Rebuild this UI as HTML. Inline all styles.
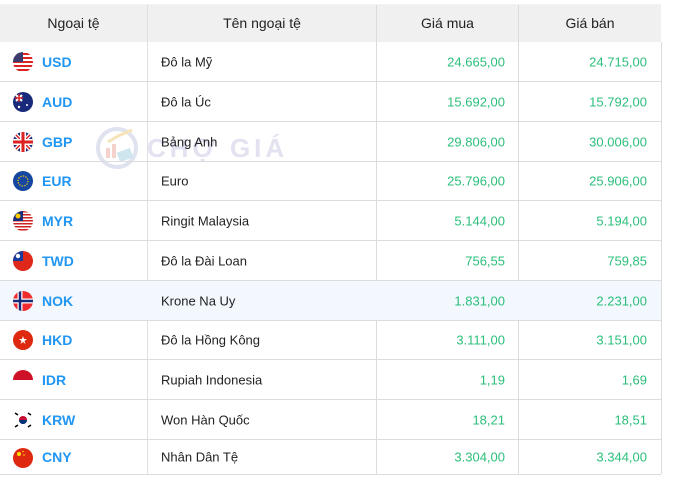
<!DOCTYPE html>
<html><head><meta charset="utf-8"><style>
body{margin:0;width:681px;height:481px;background:#fff;font-family:"Liberation Sans",Arial,sans-serif;position:relative;overflow:hidden}
.hd{position:absolute;top:5px;left:0;width:661px;height:37px;background:#f0f0f0}
.hd div{position:absolute;top:0;height:37px;line-height:36px;text-align:center;font-size:14px;color:#222}
.vl{position:absolute;width:1px;background:#dcdcdc}
.row{position:absolute;left:0;width:661px;border-bottom:1px solid #dcdcdc;font-size:13px}
.row span{position:absolute;top:50%;transform:translateY(-50%)}
.c{left:42px;color:#2196f3;font-weight:bold;font-size:14px}
.n{left:161px;color:#222}
.b{right:156px;color:#2cbf7b}
.s{right:14px;color:#2cbf7b}
.row svg{position:absolute;left:13px;top:50%;margin-top:-10px}
</style></head><body>
<div style="position:absolute;top:4px;left:0;width:661px;height:1px;background:#f3f3f3"></div>
<svg style="position:absolute;left:96px;top:124px" width="44" height="46"><circle cx="21" cy="24" r="19" fill="none" stroke="#dfe2ef" stroke-width="4"/><rect x="10" y="24" width="4" height="10" fill="#f5d3cc"/><rect x="16" y="20" width="4" height="14" fill="#f5d3cc"/><path d="M12 18L22 12L36 6" stroke="#f6e3b8" stroke-width="3" fill="none"/><rect x="22" y="26" width="14" height="10" fill="#cfe6ee" transform="rotate(-20 29 31)"/></svg>
<div style="position:absolute;left:147px;top:133px;font-size:26px;font-weight:bold;color:#e2e2f0;letter-spacing:4px">CHỢ GIÁ</div>
<div class="hd">
<div style="left:0;width:147px">Ngoại tệ</div>
<div style="left:148px;width:228px">Tên ngoại tệ</div>
<div style="left:377px;width:141px">Giá mua</div>
<div style="left:519px;width:142px">Giá bán</div>
</div>
<div class="vl" style="left:147px;top:5px;height:469px;background:#e0e0e0"></div>
<div class="vl" style="left:376px;top:5px;height:469px"></div>
<div class="vl" style="left:518px;top:5px;height:469px"></div>
<div class="vl" style="left:661px;top:42px;height:432px"></div>

<div class="row" style="top:42px;height:39px"><svg width="20" height="20"><clipPath id="a"><circle cx="10" cy="10" r="10"/></clipPath><g clip-path="url(#a)"><rect width="20" height="20" fill="#fff"/><rect y="1" width="20" height="2" fill="#d22"/><rect y="5" width="20" height="2" fill="#d22"/><rect y="9" width="20" height="2" fill="#d22"/><rect y="13" width="20" height="2" fill="#d22"/><rect y="17" width="20" height="2" fill="#d22"/><rect width="10" height="10" fill="#3c3b6e"/></g></svg><span class="c">USD</span><span class="n">Đô la Mỹ</span><span class="b">24.665,00</span><span class="s">24.715,00</span></div>
<div class="row" style="top:82px;height:39px"><svg width="20" height="20"><circle cx="10" cy="10" r="10" fill="#1a2a7a"/><path d="M3 3L9 9M9 3L3 9" stroke="#fff" stroke-width="2"/><path d="M6 2V10M2 6H10" stroke="#d22" stroke-width="1.5"/><circle cx="14" cy="13" r="1" fill="#fff"/><circle cx="6" cy="15" r="1.2" fill="#fff"/></svg><span class="c">AUD</span><span class="n">Đô la Úc</span><span class="b">15.692,00</span><span class="s">15.792,00</span></div>
<div class="row" style="top:122px;height:39px"><svg width="20" height="20"><clipPath id="g"><circle cx="10" cy="10" r="10"/></clipPath><g clip-path="url(#g)"><rect width="20" height="20" fill="#1a2a7a"/><path d="M0 0L20 20M20 0L0 20" stroke="#fff" stroke-width="4"/><path d="M0 0L20 20M20 0L0 20" stroke="#d22" stroke-width="1.5"/><path d="M10 0V20M0 10H20" stroke="#fff" stroke-width="6"/><path d="M10 0V20M0 10H20" stroke="#d22" stroke-width="3"/></g></svg><span class="c">GBP</span><span class="n">Bảng Anh</span><span class="b">29.806,00</span><span class="s">30.006,00</span></div>
<div class="row" style="top:162px;height:38px"><svg width="20" height="20"><circle cx="10" cy="10" r="10" fill="#1546a0"/><circle cx="10" cy="10" r="5" fill="none" stroke="#fc0" stroke-width="1.2" stroke-dasharray="1.3 1.3"/></svg><span class="c">EUR</span><span class="n">Euro</span><span class="b">25.796,00</span><span class="s">25.906,00</span></div>
<div class="row" style="top:201px;height:39px"><svg width="20" height="20"><clipPath id="m"><circle cx="10" cy="10" r="10"/></clipPath><g clip-path="url(#m)"><rect width="20" height="20" fill="#fff"/><rect y="0" width="20" height="1.5" fill="#c22"/><rect y="3" width="20" height="1.5" fill="#c22"/><rect y="6" width="20" height="1.5" fill="#c22"/><rect y="9" width="20" height="1.5" fill="#c22"/><rect y="12" width="20" height="1.5" fill="#c22"/><rect y="15" width="20" height="1.5" fill="#c22"/><rect y="18" width="20" height="1.5" fill="#c22"/><rect width="10" height="10" fill="#1a2a7a"/><circle cx="5" cy="5" r="2.5" fill="#fc0"/></g></svg><span class="c">MYR</span><span class="n">Ringit Malaysia</span><span class="b">5.144,00</span><span class="s">5.194,00</span></div>
<div class="row" style="top:241px;height:39px"><svg width="20" height="20"><clipPath id="t"><circle cx="10" cy="10" r="10"/></clipPath><g clip-path="url(#t)"><rect width="20" height="20" fill="#e0281a"/><rect width="10" height="10" fill="#1a3a9a"/><circle cx="5" cy="5" r="2.2" fill="#fff"/></g></svg><span class="c">TWD</span><span class="n">Đô la Đài Loan</span><span class="b">756,55</span><span class="s">759,85</span></div>
<div class="row" style="top:281px;height:39px;background:#f2f8fd"><svg width="20" height="20"><clipPath id="o"><circle cx="10" cy="10" r="10"/></clipPath><g clip-path="url(#o)"><rect width="20" height="20" fill="#ef2b2d"/><path d="M7 0V20M0 10H20" stroke="#fff" stroke-width="5"/><path d="M7 0V20M0 10H20" stroke="#1a2a7a" stroke-width="2.5"/></g></svg><span class="c">NOK</span><span class="n">Krone Na Uy</span><span class="b">1.831,00</span><span class="s">2.231,00</span></div>
<div class="row" style="top:321px;height:38px"><svg width="20" height="20"><circle cx="10" cy="10" r="10" fill="#de2910"/><path d="M10 6l1 3 3 0-2.5 2 1 3-2.5-2-2.5 2 1-3-2.5-2 3 0z" fill="#fff"/></svg><span class="c">HKD</span><span class="n">Đô la Hồng Kông</span><span class="b">3.111,00</span><span class="s">3.151,00</span></div>
<div class="row" style="top:360px;height:39px"><svg width="20" height="20"><path d="M0 10A10 10 0 0 1 20 10Z" fill="#ce1126"/></svg><span class="c">IDR</span><span class="n">Rupiah Indonesia</span><span class="b">1,19</span><span class="s">1,69</span></div>
<div class="row" style="top:400px;height:39px"><svg width="20" height="20"><circle cx="10" cy="10" r="4" fill="#c60c30"/><path d="M6 10A4 4 0 0 0 14 10Z" fill="#003478"/><path d="M2 3l3 2M15 3l3 2M2 17l3-2M15 17l3-2" stroke="#000" stroke-width="1.5"/></svg><span class="c">KRW</span><span class="n">Won Hàn Quốc</span><span class="b">18,21</span><span class="s">18,51</span></div>
<div class="row" style="top:440px;height:34px"><svg width="20" height="20" style="margin-top:-9px"><circle cx="10" cy="10" r="10" fill="#de2910"/><circle cx="6" cy="6" r="2" fill="#ffde00"/><circle cx="10" cy="3.5" r=".8" fill="#ffde00"/><circle cx="11" cy="7" r=".8" fill="#ffde00"/></svg><span class="c">CNY</span><span class="n">Nhân Dân Tệ</span><span class="b">3.304,00</span><span class="s">3.344,00</span></div>
</body></html>
